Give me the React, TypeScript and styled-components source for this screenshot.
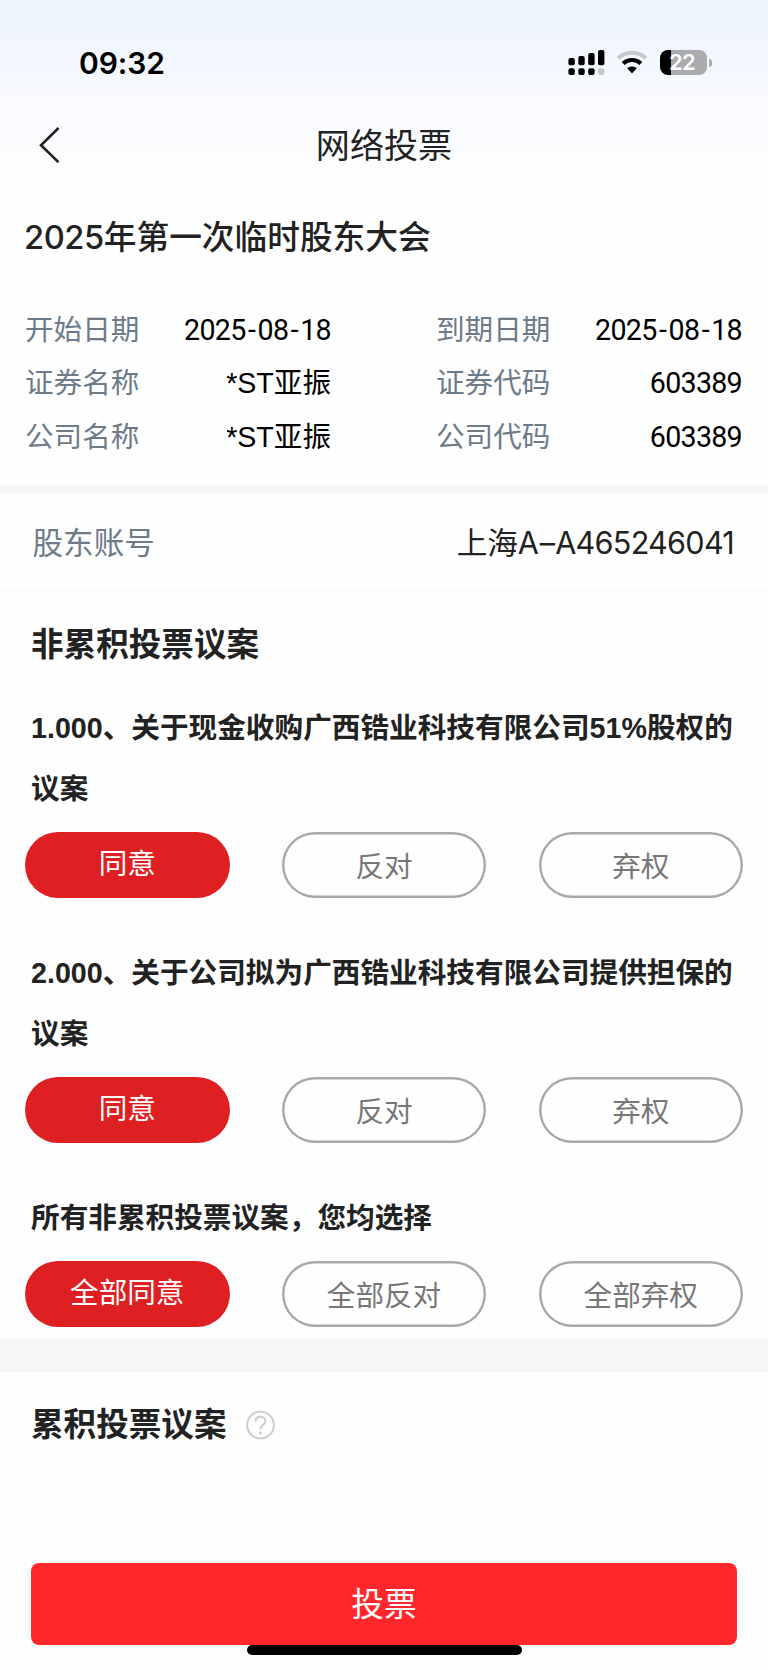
import React, { useState } from "react";
import styled, { createGlobalStyle } from "styled-components";

const cjk = `"Noto Sans CJK SC", sans-serif`;

const GlobalStyle = createGlobalStyle`
  * { box-sizing: border-box; }
  body {
    margin: 0;
    background: #fefefe;
    color: #222;
    font-family: "Liberation Sans", ${cjk};
  }
  button { font-family: inherit; cursor: pointer; }
`;

const Screen = styled.div`
  display: flex;
  flex-direction: column;
  width: 768px;
  height: 1670px;
  overflow: hidden;
  background: linear-gradient(180deg, #ecf4fe 0, #f1f6fe 40px, #f8faff 95px, #fefefe 185px);
`;

const StatusBar = styled.div`
  display: flex;
  align-items: center;
  justify-content: space-between;
  height: 105px;
  padding: 20px 56.5px 0 79px;
`;

const Clock = styled.span`
  font: 600 30px/36px Inter, sans-serif;
  letter-spacing: -0.1px;
  color: #000;
`;

const StatusIcons = styled.div`
  display: flex;
  align-items: center;
  svg { display: block; }
`;

const NavBar = styled.header`
  display: grid;
  grid-template-columns: 120px 1fr 120px;
  align-items: center;
  height: 80px;
`;

const BackButton = styled.button`
  display: flex;
  padding: 0 0 0 38px;
  border: 0;
  background: none;
`;

const NavTitle = styled.h1`
  margin: 0;
  padding-top: 2px;
  font-size: 34.1px;
  font-weight: 400;
  line-height: 40px;
  text-align: center;
`;

const MeetingTitle = styled.h2`
  margin: 0;
  padding-left: 24px;
  font: 500 32.7px/104px Inter, ${cjk};
`;

const MeetingYear = styled.span`
  letter-spacing: -0.45px;
`;

const InfoGrid = styled.dl`
  display: grid;
  grid-template-columns: 306px 306px;
  grid-auto-rows: 53.3px;
  column-gap: 105px;
  height: 196px;
  margin: 0;
  padding: 15px 25px 0;
`;

const InfoItem = styled.div`
  display: flex;
  justify-content: space-between;
  font-size: 28.6px;
  line-height: 53.3px;
`;

const InfoLabel = styled.dt`
  color: #6d7a87;
`;

const InfoValue = styled.dd<{ $numeric: boolean }>`
  margin: 0;
  color: #000;
  font-family: ${(p) => (p.$numeric ? "Roboto" : '"Liberation Sans"')}, ${cjk};
  letter-spacing: ${(p) => (p.$numeric ? "-0.7px" : "0")};
`;

const Dash = styled.span`
  padding: 0 2.4px;
`;

const Band = styled.div<{ $height: number }>`
  flex: none;
  height: ${(p) => p.$height}px;
  background: #f6f6f6;
`;

const AccountRow = styled.div`
  display: flex;
  justify-content: space-between;
  height: 98px;
  padding: 0 34px 0 32.5px;
  border-bottom: 1px solid #f5f5f5;
  font-size: 30.6px;
  line-height: 101px;
`;

const AccountLabel = styled.span`
  color: #6d7a87;
`;

const AccountValue = styled.span`
  font-family: Inter, ${cjk};
  font-weight: 400;
  line-height: 99px;
`;

const AccountNumber = styled.span`
  letter-spacing: -0.75px;
`;

const AccountDash = styled.span`
  padding: 0 1px 0 1.5px;
`;

const SectionHeading = styled.h3`
  display: flex;
  align-items: center;
  gap: 19.5px;
  height: 106px;
  margin: 0;
  padding: 1px 0 0 31px;
  font-size: 32.6px;
  font-weight: 700;
  line-height: 42px;
`;

const ProposalList = styled.div`
  padding-bottom: 12px;
`;

const Proposal = styled.section`
  & + & { margin-top: 44.3px; }
`;

const ProposalText = styled.p`
  margin: 0;
  padding: 0.6px 31px 0;
  font-size: 28.65px;
  font-weight: 700;
  line-height: 61px;
`;

const Choices = styled.div`
  display: grid;
  grid-template-columns: repeat(3, 204.5px);
  justify-content: space-between;
  margin-top: 12.1px;
  padding: 0 25px;
`;

const Choice = styled.button<{ $selected: boolean }>`
  height: 66px;
  padding: ${(p) => (p.$selected ? "0 0 1px" : "4px 0 0")};
  border: 0;
  border-radius: 33px;
  box-shadow: ${(p) => (p.$selected ? "none" : "inset 0 0 0 2.4px #a8a8a8")};
  background: ${(p) => (p.$selected ? "#df2022" : "transparent")};
  color: ${(p) => (p.$selected ? "#fff" : "#777")};
  font-size: 28.6px;
  line-height: 40px;
`;

const Footer = styled.footer`
  display: flex;
  flex-direction: column;
  align-items: center;
  margin-top: auto;
  padding: 0 31px 15.5px;
`;

const SubmitButton = styled.button`
  width: 706px;
  height: 81.5px;
  padding: 2px 0 0;
  border: 0;
  border-radius: 8px;
  background: #ff272b;
  color: #fff;
  font-size: 32.7px;
  line-height: 42px;
`;

const HomeIndicator = styled.div`
  width: 275px;
  height: 10px;
  border-radius: 5px;
  background: #000;
`;

const SignalIcon = () => (
  <svg width="37" height="26" viewBox="0 0 37 26">
    <rect x="0.4" y="8" width="6.4" height="7.3" rx="2" />
    <rect x="10.3" y="6" width="6.4" height="9.3" rx="2" />
    <rect x="20.2" y="3" width="6.4" height="12.3" rx="2" />
    <rect x="30" y="0" width="6.4" height="15.3" rx="2" />
    <rect x="0.4" y="18.2" width="6.4" height="6.8" rx="2" />
    <rect x="10.3" y="18.2" width="6.4" height="6.8" rx="2" />
    <rect x="20.2" y="18.2" width="6.4" height="6.8" rx="2" />
    <rect x="30" y="18.2" width="6.4" height="6.8" rx="2" fill="#c5c7cb" />
  </svg>
);

const WifiSvg = styled.svg`
  margin: 0 12px 0 11px;
`;

const WifiIcon = () => (
  <WifiSvg width="32" height="26" viewBox="0 0 32 26" fill="none">
    <path d="M2 8.2C9.8.9 22.2.9 30 8.2" stroke="#c5c7cb" strokeWidth="4" />
    <path d="M7.1 13.5c5-4.7 12.8-4.7 17.8 0" stroke="#000" strokeWidth="4.2" />
    <path d="M11.2 18.3c2.8-2.4 6.8-2.4 9.6 0L16 23.5z" fill="#000" />
  </WifiSvg>
);

const Battery = styled.div`
  display: flex;
  align-items: center;
  gap: 2px;
`;

const BatteryBody = styled.div`
  width: 47px;
  height: 25px;
  padding-left: 9.5px;
  border-radius: 8px;
  background: linear-gradient(90deg, #000 11px, #a9abaf 11px);
  color: #fff;
  font: 600 22px/25px Inter, sans-serif;
  letter-spacing: -0.8px;
`;

const BatteryTip = styled.div`
  width: 3px;
  height: 8px;
  border-radius: 0 4px 4px 0;
  background: #a9abaf;
`;

const BackIcon = () => (
  <svg width="22" height="36" viewBox="0 0 22 36" fill="none" stroke="#222" strokeWidth="2.6">
    <path d="M20.5 1L3 18.2l17.5 17" />
  </svg>
);

const HelpIcon = () => (
  <svg width="29" height="29" viewBox="0 0 29 29" fill="none" stroke="#ccc" strokeWidth="1.9">
    <circle cx="14.5" cy="14" r="13.4" />
    <path d="M9.5 10.8c0-3 2-5 5-5s5 1.9 5 4.5c0 3.3-5 3.7-5 7.9" />
    <circle cx="14.5" cy="22" r="1.5" fill="#ccc" stroke="none" />
  </svg>
);

const info = [
  ["开始日期", "2025-08-18"],
  ["到期日期", "2025-08-18"],
  ["证券名称", "*ST亚振"],
  ["证券代码", "603389"],
  ["公司名称", "*ST亚振"],
  ["公司代码", "603389"],
];

const proposals = [
  {
    text: "1.000、关于现金收购广西锆业科技有限公司51%股权的议案",
    options: ["同意", "反对", "弃权"],
  },
  {
    text: "2.000、关于公司拟为广西锆业科技有限公司提供担保的议案",
    options: ["同意", "反对", "弃权"],
  },
  {
    text: "所有非累积投票议案，您均选择",
    options: ["全部同意", "全部反对", "全部弃权"],
  },
];

const renderValue = (value: string) =>
  value.split("-").map((part, i) => (
    <React.Fragment key={i}>
      {i > 0 && <Dash>-</Dash>}
      {part}
    </React.Fragment>
  ));

export default function App() {
  const [votes, setVotes] = useState([0, 0, 0]);

  const choose = (proposal: number, option: number) =>
    setVotes((current) =>
      proposal === 2 ? [option, option, option] : current.map((v, i) => (i === proposal ? option : v))
    );

  return (
    <>
      <GlobalStyle />
      <Screen>
        <StatusBar>
          <Clock>09:32</Clock>
          <StatusIcons>
            <SignalIcon />
            <WifiIcon />
            <Battery>
              <BatteryBody>22</BatteryBody>
              <BatteryTip />
            </Battery>
          </StatusIcons>
        </StatusBar>
        <NavBar>
          <BackButton aria-label="返回">
            <BackIcon />
          </BackButton>
          <NavTitle>网络投票</NavTitle>
        </NavBar>
        <MeetingTitle>
          <MeetingYear>2025</MeetingYear>年第一次临时股东大会
        </MeetingTitle>
        <InfoGrid>
          {info.map(([label, value]) => (
            <InfoItem key={label}>
              <InfoLabel>{label}</InfoLabel>
              <InfoValue $numeric={/^\d/.test(value)}>{renderValue(value)}</InfoValue>
            </InfoItem>
          ))}
        </InfoGrid>
        <Band $height={8} />
        <AccountRow>
          <AccountLabel>股东账号</AccountLabel>
          <AccountValue>
            上海
            <AccountNumber>
              A<AccountDash>–</AccountDash>A465246041
            </AccountNumber>
          </AccountValue>
        </AccountRow>
        <SectionHeading>非累积投票议案</SectionHeading>
        <ProposalList>
          {proposals.map((proposal, p) => (
            <Proposal key={proposal.text}>
              <ProposalText>{proposal.text}</ProposalText>
              <Choices>
                {proposal.options.map((option, o) => (
                  <Choice key={option} $selected={votes[p] === o} onClick={() => choose(p, o)}>
                    {option}
                  </Choice>
                ))}
              </Choices>
            </Proposal>
          ))}
        </ProposalList>
        <Band $height={33} />
        <SectionHeading>
          累积投票议案
          <HelpIcon />
        </SectionHeading>
        <Footer>
          <SubmitButton>投票</SubmitButton>
          <HomeIndicator />
        </Footer>
      </Screen>
    </>
  );
}
